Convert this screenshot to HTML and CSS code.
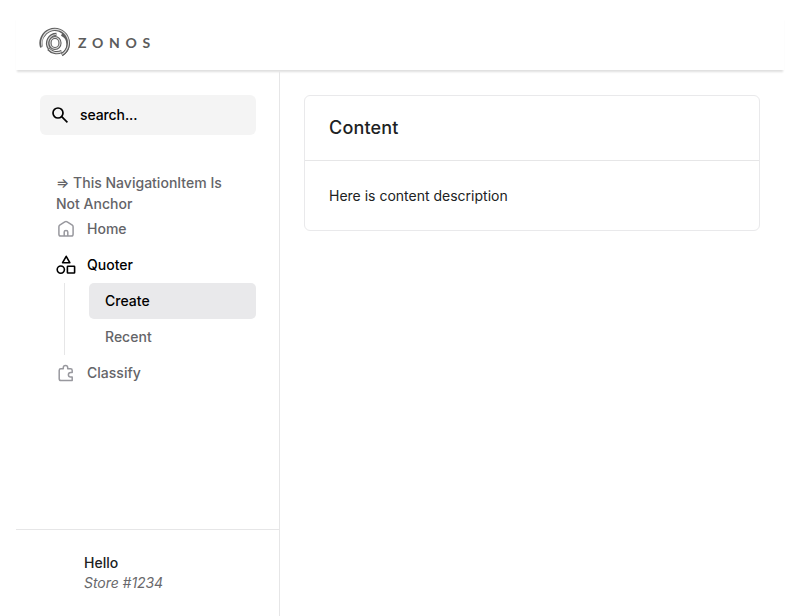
FILE: index.html
```html
<!DOCTYPE html>
<html lang="en">
<head>
<meta charset="utf-8">
<title>Zonos</title>
<link rel="stylesheet" href="styles.css">
</head>
<body>
<div class="app">
  <header class="header">
    <svg class="logo-mark" viewBox="0 0 32 32" fill="none" stroke="#5e5e5e">
      <g stroke-width="3.2">
        <path d="M2.6 20.3A13.7 13.7 0 1 1 22.8 27.8"/>
        <path d="M22.7 7.3A11 11 0 0 1 22.8 27.2"/>
        <path d="M22.8 24.3A10.8 10.8 0 0 1 9.4 21.9"/>
        <path d="M10.3 21.6A8.9 8.9 0 0 1 17.5 7.4"/>
        <ellipse cx="16" cy="16" rx="5" ry="5.5"/>
      </g>
      <g stroke="#dedede" stroke-width="1.1">
        <path d="M3.4 20.1A13.4 13.4 0 1 1 22.6 27.5"/>
        <path d="M22.8 24.4A10.8 10.8 0 0 1 10 22.2"/>
        <path d="M10.2 21.3A8.9 8.9 0 0 1 17.2 7.5"/>
        <ellipse cx="16" cy="16" rx="5" ry="5.5"/>
      </g>
    </svg>
    <span class="logo-word">ZONOS</span>
  </header>
  <div class="body">
    <aside class="sidebar">
      <div class="search">
        <svg class="search-icon" viewBox="0 0 20 20" fill="none" stroke="#000" stroke-width="1.7"><circle cx="8" cy="8" r="5"/><path d="M11.7 11.7L17.4 17.4"/></svg>
        <span>search...</span>
      </div>
      <nav class="nav">
        <div class="nav-note">⇒ This NavigationItem Is Not Anchor</div>
        <a class="nav-item">
          <svg class="icon" viewBox="0 0 20 20" fill="none" stroke="#98989e" stroke-width="1.5" stroke-linejoin="round"><path d="M2.9 7.8Q2.9 6.8 3.7 6.2L8.8 2.9Q10 2.2 11.2 2.9L16.3 6.2Q17.1 6.8 17.1 7.8V15.3Q17.1 17.1 15.3 17.1H4.7Q2.9 17.1 2.9 15.3Z"/><path d="M8.2 17V13Q8.2 11.4 10 11.4T11.8 13V17"/></svg>
          <span>Home</span>
        </a>
        <a class="nav-item active">
          <svg class="icon" viewBox="0 0 20 20" fill="none" stroke="#000" stroke-width="1.6" stroke-linejoin="round"><path d="M10.2 1.3L13.8 7.7H6.6Z"/><circle cx="4.8" cy="14.6" r="3.6"/><rect x="11.4" y="11.2" width="7.2" height="6.8" rx=".5"/></svg>
          <span>Quoter</span>
        </a>
        <div class="subnav">
          <a class="sub-item selected">Create</a>
          <a class="sub-item">Recent</a>
        </div>
        <a class="nav-item">
          <svg class="icon" viewBox="0 0 20 20" fill="none" stroke="#98989e" stroke-width="1.5" stroke-linejoin="round"><path d="M4.8 5.8H7.3V4.6A2.2 2.2 0 0 1 11.7 4.6V5.8H14.5Q16.2 5.8 16.2 7.4V9.4H14.7A2.3 2.3 0 0 0 14.7 14H16.2V17.6H5Q3.2 17.6 3.2 15.8V7.5Q3.2 5.8 4.8 5.8Z"/></svg>
          <span>Classify</span>
        </a>
      </nav>
      <footer class="account">
        <div class="account-name">Hello</div>
        <div class="account-store">Store #1234</div>
      </footer>
    </aside>
    <main class="main">
      <section class="card">
        <h1 class="card-title">Content</h1>
        <p class="card-text">Here is content description</p>
      </section>
    </main>
  </div>
</div>
</body>
</html>
```
FILE: styles.css
```css
* { box-sizing: border-box; }
body {
  margin: 0;
  padding: 16px 16px 0;
  height: 100vh;
  overflow: hidden;
  background: #fff;
  font: 500 14px/20px Inter, "Liberation Sans", sans-serif;
  letter-spacing: 0.01px;
  color: #202223;
}
.app { height: 100%; display: flex; flex-direction: column; }
.header {
  height: 54px;
  flex: none;
  padding: 0 23px;
  display: flex;
  align-items: center;
  background: #fff;
  box-shadow: 0 3px 2px -1px rgba(0, 0, 0, .13), 0 0 1px rgba(0, 0, 0, .02);
}
.logo-mark { width: 32px; height: 32px; }
.logo-word {
  margin-left: 7px;
  font: 700 14px/20px Lato, sans-serif;
  letter-spacing: 5.7px;
  color: #5c5c5c;
}
.body { flex: 1; display: flex; min-height: 0; padding-top: 1px; }
.sidebar {
  width: 264px;
  flex: none;
  display: flex;
  flex-direction: column;
  border-right: 1px solid #e6e6e7;
}
.search {
  display: flex;
  align-items: center;
  gap: 10px;
  height: 40px;
  margin: 24px 23px 0 24px;
  padding-left: 10px;
  border-radius: 6px;
  background: #f4f4f4;
  color: #000;
  letter-spacing: -0.1px;
}
.search-icon { width: 20px; height: 20px; }
.nav { flex: 1; padding: 37px 23px 0 40px; color: #646468; }
.nav-note { line-height: 21px; padding: 0 24px 5px 0; margin-bottom: -8px; }
.nav-item { display: flex; align-items: center; gap: 11px; height: 36px; }
.active { color: #000; }
.icon { width: 20px; height: 20px; }
.subnav { margin-left: 8px; padding-left: 24px; border-left: 1px solid #e6e6e7; }
.sub-item {
  display: flex;
  align-items: center;
  height: 36px;
  padding-left: 16px;
  border-radius: 5px;
}
.selected { background: #e9e9eb; color: #000; }
.account { height: 87px; padding: 23px 0 0 68px; border-top: 1px solid #e6e6e7; }
.account-name { color: #202223; }
.account-store { font-weight: 400; font-style: italic; color: #68686b; letter-spacing: -0.05px; }
.main { flex: 1; padding: 24px; }
.card { height: 136px; border: 1px solid #e9e9eb; border-radius: 6px; }
.card-title {
  margin: 0;
  height: 65px;
  padding: 20px 24px;
  border-bottom: 1px solid #e6e6e7;
  font-size: 18px;
  line-height: 24px;
  font-weight: 500;
  letter-spacing: 0.18px;
}
.card-text { margin: 0; padding: 25px 24px; font-weight: 400; letter-spacing: 0; }
```
